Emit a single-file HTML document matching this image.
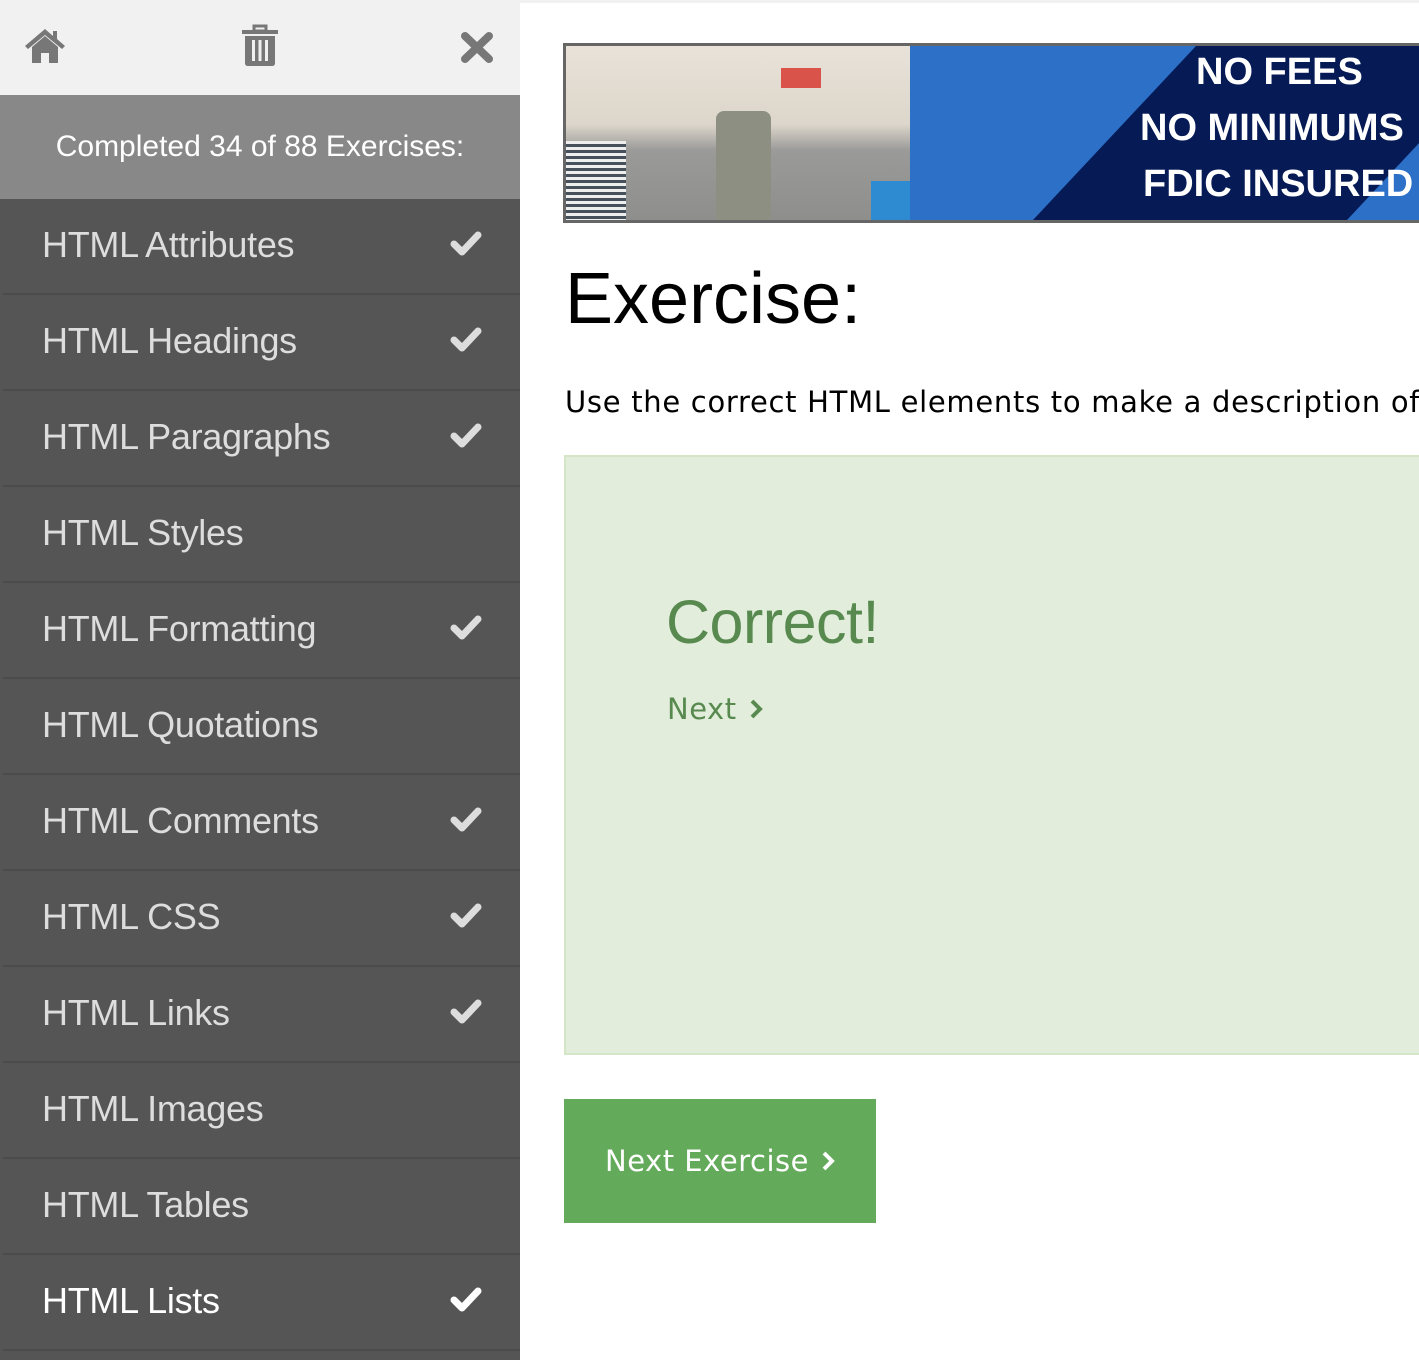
<!DOCTYPE html>
<html><head><meta charset="utf-8"><style>
*{margin:0;padding:0;box-sizing:border-box}
body{width:1419px;height:1360px;overflow:hidden;background:#fff;font-family:"Liberation Sans",Arial,sans-serif;position:relative}
#side{position:absolute;left:0;top:0;width:520px;height:1360px;background:#555}
#top{height:95px;background:#f1f1f1;position:relative}
#prog{height:104px;background:#888;color:#fff;font-size:30px;text-align:center;line-height:104px}
.it{height:96px;position:relative;color:#ddd;font-size:36px;line-height:92px;border-bottom:2px solid #4b4b4b;margin-left:3px;padding-left:39px;letter-spacing:-0.3px}
.it svg{position:absolute;right:38px;top:32px}
.it.act{color:#fff}
#topline{position:absolute;left:520px;top:0;width:899px;height:3px;background:#f1f1f1}
#ban{position:absolute;left:563px;top:43px;width:870px;height:180px;border:3px solid #666;background:#2c70c8;overflow:hidden}
.bt{position:absolute;color:#fff;font-weight:bold;font-size:38px;font-family:"Liberation Sans",sans-serif;white-space:nowrap}
</style></head><body>
<div id="topline"></div>
<div id="side">
<div id="top">
<svg style="position:absolute;left:23px;top:27px" width="44" height="36" viewBox="0 0 44 36"><path d="M22 2 L2 19 L5 22 L22 8 L39 22 L42 19 L34 12 V4 H30 V9 Z" fill="#777"/><path d="M9 20 L22 9 L35 20 V36 H26 V26 H18 V36 H9Z" fill="#777"/></svg>
<svg style="position:absolute;left:241px;top:24px" width="38" height="43" viewBox="0 0 38 43"><rect x="1" y="6" width="36" height="4" fill="#777"/><rect x="13" y="2" width="12" height="5" fill="none" stroke="#777" stroke-width="3"/><path d="M4 12 H34 V39 Q34 42 31 42 H7 Q4 42 4 39Z" fill="#777"/><rect x="11" y="16" width="3" height="21" fill="#f1f1f1"/><rect x="17.5" y="16" width="3" height="21" fill="#f1f1f1"/><rect x="24" y="16" width="3" height="21" fill="#f1f1f1"/></svg>
<svg style="position:absolute;left:460px;top:31px" width="34" height="33" viewBox="0 0 34 33"><path d="M5 5 L29 28 M29 5 L5 28" stroke="#777" stroke-width="8" stroke-linecap="round"/></svg>
</div>
<div id="prog">Completed 34 of 88 Exercises:</div>
<div class="it">HTML Attributes<svg width="32" height="25" viewBox="0 0 32 25"><path d="M4 13 L12 21 L28 4" fill="none" stroke="#ddd" stroke-width="7" stroke-linejoin="round" stroke-linecap="round"/></svg></div>
<div class="it">HTML Headings<svg width="32" height="25" viewBox="0 0 32 25"><path d="M4 13 L12 21 L28 4" fill="none" stroke="#ddd" stroke-width="7" stroke-linejoin="round" stroke-linecap="round"/></svg></div>
<div class="it">HTML Paragraphs<svg width="32" height="25" viewBox="0 0 32 25"><path d="M4 13 L12 21 L28 4" fill="none" stroke="#ddd" stroke-width="7" stroke-linejoin="round" stroke-linecap="round"/></svg></div>
<div class="it">HTML Styles</div>
<div class="it">HTML Formatting<svg width="32" height="25" viewBox="0 0 32 25"><path d="M4 13 L12 21 L28 4" fill="none" stroke="#ddd" stroke-width="7" stroke-linejoin="round" stroke-linecap="round"/></svg></div>
<div class="it">HTML Quotations</div>
<div class="it">HTML Comments<svg width="32" height="25" viewBox="0 0 32 25"><path d="M4 13 L12 21 L28 4" fill="none" stroke="#ddd" stroke-width="7" stroke-linejoin="round" stroke-linecap="round"/></svg></div>
<div class="it">HTML CSS<svg width="32" height="25" viewBox="0 0 32 25"><path d="M4 13 L12 21 L28 4" fill="none" stroke="#ddd" stroke-width="7" stroke-linejoin="round" stroke-linecap="round"/></svg></div>
<div class="it">HTML Links<svg width="32" height="25" viewBox="0 0 32 25"><path d="M4 13 L12 21 L28 4" fill="none" stroke="#ddd" stroke-width="7" stroke-linejoin="round" stroke-linecap="round"/></svg></div>
<div class="it">HTML Images</div>
<div class="it">HTML Tables</div>
<div class="it act">HTML Lists<svg width="32" height="25" viewBox="0 0 32 25"><path d="M4 13 L12 21 L28 4" fill="none" stroke="#fff" stroke-width="7" stroke-linejoin="round" stroke-linecap="round"/></svg></div>
</div>
<div id="ban">
<div style="position:absolute;left:0;top:0;width:344px;height:174px;background:linear-gradient(180deg,#e8e2d8 0%,#ddd6cb 45%,#9a9a98 60%,#8e8e8c 100%)"></div>
<div style="position:absolute;left:0;top:95px;width:60px;height:79px;background:repeating-linear-gradient(180deg,#eee 0 3px,#45505a 3px 6px)"></div>
<div style="position:absolute;left:150px;top:65px;width:55px;height:109px;background:#8c8f82;border-radius:8px 8px 0 0"></div>
<div style="position:absolute;left:215px;top:22px;width:40px;height:20px;background:#d9534a"></div>
<div style="position:absolute;left:305px;top:135px;width:39px;height:39px;background:#2e8bd1"></div>
<svg style="position:absolute;left:344px;top:0" width="520" height="174"><polygon points="123,174 286,0 600,0 437,174" fill="#061a55"/></svg>
<div class="bt" style="left:630px;top:5px">NO FEES</div>
<div class="bt" style="left:574px;top:61px">NO MINIMUMS</div>
<div class="bt" style="left:577px;top:117px">FDIC INSURED</div>
</div>
<div style="position:absolute;left:565px;top:258px;font-size:72px;color:#000">Exercise:</div>
<div style="position:absolute;left:565px;top:385px;font-size:29px;font-family:'DejaVu Sans',Verdana,sans-serif;white-space:nowrap;color:#000;letter-spacing:0.7px">Use the correct HTML elements to make a description of</div>
<div style="position:absolute;left:564px;top:455px;width:900px;height:600px;background:#e2eedb;border:2px solid #d4e6c6"></div>
<div style="position:absolute;left:666px;top:587px;font-size:61px;color:#588a50;letter-spacing:-0.5px">Correct!</div>
<div style="position:absolute;left:667px;top:692px;font-size:29px;color:#588a50;font-family:'DejaVu Sans',Verdana,sans-serif;letter-spacing:0.5px">Next<svg style="margin-left:12px;vertical-align:-1px" width="14" height="22" viewBox="0 0 14 22"><path d="M3 3 L11 11 L3 19" fill="none" stroke="#588a50" stroke-width="4"/></svg></div>
<div style="position:absolute;left:564px;top:1099px;width:312px;height:124px;background:#64aa5b;color:#fff;font-size:29px;font-family:'DejaVu Sans',Verdana,sans-serif;line-height:124px;padding-left:41px;white-space:nowrap;letter-spacing:0.5px">Next Exercise<svg style="margin-left:12px;vertical-align:-1px" width="14" height="22" viewBox="0 0 14 22"><path d="M3 3 L11 11 L3 19" fill="none" stroke="#fff" stroke-width="4"/></svg></div>
</body></html>
